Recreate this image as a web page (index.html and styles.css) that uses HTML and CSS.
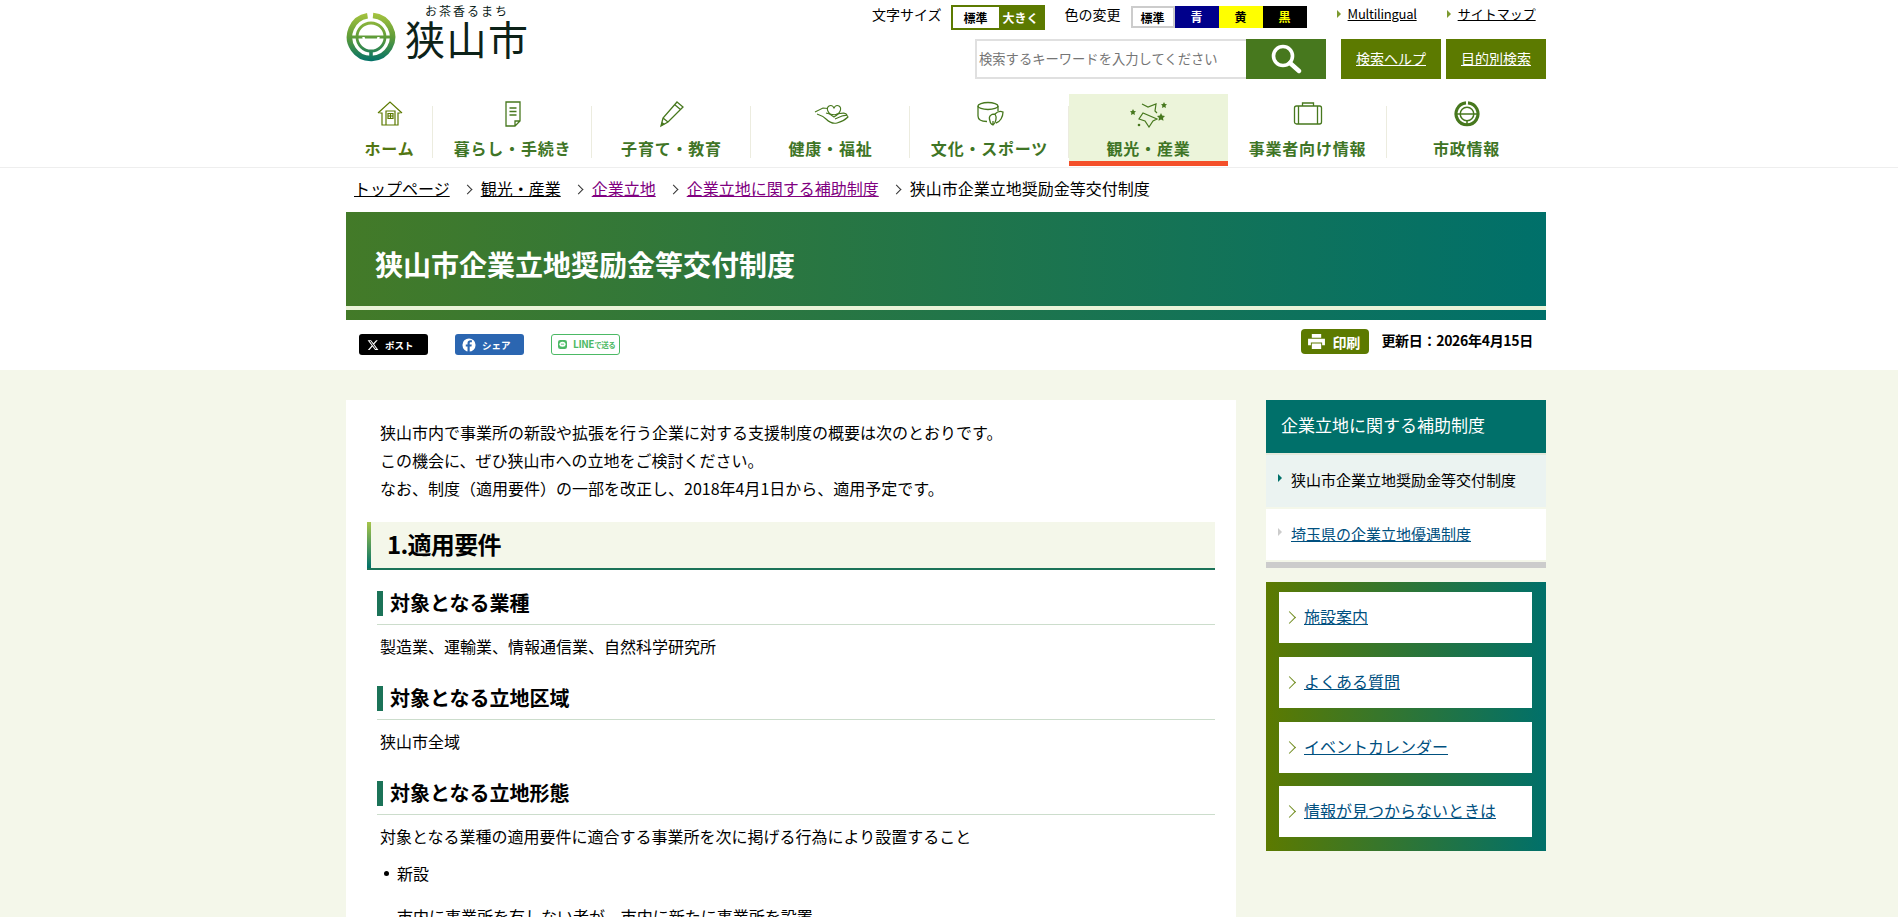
FILE: index.html
```html
<!DOCTYPE html>
<html lang="ja">
<head>
<meta charset="utf-8">
<title>狭山市企業立地奨励金等交付制度</title>
<link rel="stylesheet" href="styles.css">
</head>
<body>
<header class="site-header">
  <div class="wrap top">
    <a class="logo">
      <svg class="emblem" viewBox="0 0 50 50" width="50" height="50" aria-hidden="true">
        <defs>
          <linearGradient id="lg" gradientUnits="userSpaceOnUse" x1="0" y1="0" x2="0" y2="50">
            <stop offset="0" stop-color="#a9c53f"/><stop offset=".5" stop-color="#5f9c38"/><stop offset="1" stop-color="#00706a"/>
          </linearGradient>
        </defs>
        <g fill="none" stroke="url(#lg)">
          <path stroke-width="5.500" d="M21.500 3.800A21.500 21.500 0 1 0 27 3.600"/>
          <circle cx="25" cy="25" r="14" stroke-width="2.800"/>
          <path stroke-width="3" d="M5 25H45"/>
          <path stroke-width="3.600" d="M25 39V46"/>
          <path stroke-width="2.400" d="M17.500 25a7.500 9 0 0 0 15 0" stroke="#fff"/>
        </g>
      </svg>
      <span class="logo-text"><small>お茶香るまち</small><b>狭山市</b></span>
    </a>
    <div class="tools">
      <div class="tool-row">
        <span class="tool-label">文字サイズ</span>
        <span class="size-switch"><span class="sz-std">標準</span><span class="sz-big">大きく</span></span>
        <span class="tool-label color-label">色の変更</span>
        <span class="color-switch"><span class="c-std">標準</span><span class="c-blue">青</span><span class="c-yellow">黄</span><span class="c-black">黒</span></span>
        <a class="mini-link ml-first" href="#">Multilingual</a>
        <a class="mini-link ml-second" href="#">サイトマップ</a>
      </div>
      <div class="search-row">
        <div class="search-input">検索するキーワードを入力してください</div>
        <button class="search-btn" aria-label="検索">
          <svg viewBox="0 0 32 32" width="32" height="32"><circle cx="13" cy="13" r="9.500" fill="none" stroke="#fff" stroke-width="3.600"/><path d="M20 20l9 8" stroke="#fff" stroke-width="4.400" stroke-linecap="round"/></svg>
        </button>
        <a class="olive-btn help" href="#">検索ヘルプ</a>
        <a class="olive-btn purpose" href="#">目的別検索</a>
      </div>
    </div>
  </div>
  <nav class="gnav">
    <ul class="wrap gnav-list">
      <li class="home"><svg viewBox="0 0 32 28" width="32" height="28"><g fill="none" stroke="#5c7a00" stroke-width="1.200"><path d="M4 13L16 2l12 11M5.500 13h2.500v12h16V13h2.500"/><path d="M12 25V11h9v14M14 13.500h5v5h-5zM16.500 13.500v5M14 16h5"/></g></svg><span>ホーム</span></li>
      <li><svg viewBox="0 0 32 28" width="32" height="28"><g fill="none" stroke="#47781e" stroke-width="1.300"><path d="M9 2h14v19l-5 5H9zM23 21h-5v5M12.500 8h7M12.500 11.500h7M12.500 15h7"/></g></svg><span>暮らし・手続き</span></li>
      <li><svg viewBox="0 0 32 28" width="32" height="28"><g fill="none" stroke="#47781e" stroke-width="1.300"><path d="M21 2l6 5-15 15-7 4 2-8zM18.500 4.500l6 5M7 18l5 4"/></g><path d="M5 26l1-4 3 2z" fill="#47781e"/></svg><span>子育て・教育</span></li>
      <li><svg viewBox="0 0 36 28" width="36" height="28"><g fill="none" stroke="#47781e" stroke-width="1.100"><path d="M21 17c-7-4-8-9-5-11 2-1 4 0 5 2 1-2 3-3 5-2 3 2 2 7-5 11z"/><path d="M2 12l8-4 5 .5M4 14c3 1 6 2 9 5 3 3 7 5 11 4 4-1 8-3 11-6 0-2-3-2-6-1l-7 3M13 13c3 1 9 3 11 1 5-1 9-2 10 1"/></g></svg><span>健康・福祉</span></li>
      <li><svg viewBox="0 0 32 28" width="32" height="28"><g fill="none" stroke="#47781e" stroke-width="1.300"><ellipse cx="14" cy="6" rx="10" ry="3.500"/><path d="M4 6v10c0 4 4 5.500 9 5.500M24 6v5"/><path d="M16 21c-2-5 1-7 5-7 2 3 1 9-2 11-2-1-3-2-3-4zM21 14c3-3 6-3 8-2 0 5-3 10-7 11M19 25v-4"/></g></svg><span>文化・スポーツ</span></li>
      <li class="active"><svg viewBox="0 0 40 28" width="40" height="28"><g fill="#47781e"><path d="M4 9l1 2 2 .3-1.500 1.400.4 2.300-1.900-1.100-2 1.100.4-2.300L1 11.300l2-.3zM35 2l1 2 2 .3-1.500 1.400.4 2.300-1.900-1.100-2 1.100.4-2.300L32 4.300l2-.3zM32 13l1.200 2.500 2.800.4-2 2 .5 2.800-2.500-1.300-2.500 1.300.5-2.800-2-2 2.800-.4z"/><circle cx="10" cy="25" r="1.300"/></g><path d="M13 4l6 3 8-3-1 7 2 2M28 19l-4 2-4 6-4-6-6-2 4-6z" fill="none" stroke="#47781e" stroke-width="1.200"/></svg><span>観光・産業</span></li>
      <li><svg viewBox="0 0 32 28" width="32" height="28"><g fill="none" stroke="#47781e" stroke-width="1.300"><rect x="2.500" y="6" width="27" height="18" rx="2"/><path d="M10.500 6V3h11v3M6.500 6v18M25.500 6v18"/></g></svg><span>事業者向け情報</span></li>
      <li class="last"><svg viewBox="0 0 32 28" width="32" height="28"><g fill="none" stroke="#47781e"><path stroke-width="3.200" d="M15 2.800A11 11 0 1 0 17 2.800"/><circle cx="16" cy="14" r="6.800" stroke-width="1.500"/><path stroke-width="1.500" d="M5 14h22M16 21v4"/></g></svg><span>市政情報</span></li>
    </ul>
  </nav>
</header>

<div class="wrap crumb">
  <a class="c-top" href="#">トップページ</a>
  <a class="c-dark" href="#">観光・産業</a>
  <a class="c-visited" href="#">企業立地</a>
  <a class="c-visited" href="#">企業立地に関する補助制度</a>
  <span class="c-current">狭山市企業立地奨励金等交付制度</span>
</div>

<section class="wrap page-title"><h1>狭山市企業立地奨励金等交付制度</h1></section>

<div class="wrap share-row">
  <a class="sns sns-x"><svg viewBox="0 0 24 24" width="12" height="12"><path fill="#fff" d="M18.244 2.250h3.308l-7.227 8.260 8.502 11.240H16.170l-5.214-6.817L4.990 21.750H1.680l7.730-8.835L1.254 2.250H8.080l4.713 6.231zm-1.161 17.520h1.833L7.084 4.126H5.117z"/></svg><b>ポスト</b></a>
  <a class="sns sns-fb"><svg viewBox="0 0 16 16" width="14" height="14"><circle cx="8" cy="8" r="7.500" fill="#fff"/><path d="M8.800 16V9.800h2l.4-2.400H8.800V6c0-.8.300-1.200 1.200-1.200h1.300V2.700c-2.800-.5-5 .2-5 3v1.700H4.300v2.400h2V16z" fill="#2b66b1"/></svg><b>シェア</b></a>
  <a class="sns sns-line"><svg viewBox="0 0 14 14" width="9" height="9"><rect width="14" height="14" rx="3.500" fill="#4cb965"/><ellipse cx="7" cy="6.500" rx="4.800" ry="3.900" fill="#fff"/><path d="M4.500 6.500h5" stroke="#4cb965" stroke-width="1.300"/></svg><b>LINE<small>で送る</small></b></a>
  <div class="share-right">
    <a class="print"><svg viewBox="0 0 18 16" width="17" height="15"><path d="M4 0h10v4H4zM0 5h18v7h-3V9H3v3H0zM4 10h10v6H4z" fill="#fff"/></svg><b>印刷</b></a>
    <span class="updated">更新日：2026年4月15日</span>
  </div>
</div>

<main class="content-band">
  <div class="wrap columns">
    <article class="article">
      <div class="lead">
        <p>狭山市内で事業所の新設や拡張を行う企業に対する支援制度の概要は次のとおりです。</p>
        <p>この機会に、ぜひ狭山市への立地をご検討ください。</p>
        <p>なお、制度（適用要件）の一部を改正し、2018年4月1日から、適用予定です。</p>
      </div>
      <h2>1.適用要件</h2>
      <h3><span>対象となる業種</span></h3>
      <p class="body">製造業、運輸業、情報通信業、自然科学研究所</p>
      <h3><span>対象となる立地区域</span></h3>
      <p class="body">狭山市全域</p>
      <h3><span>対象となる立地形態</span></h3>
      <p class="body">対象となる業種の適用要件に適合する事業所を次に掲げる行為により設置すること</p>
      <ul class="bullets">
        <li>新設</li>
      </ul>
      <p class="sub">市内に事業所を有しない者が、市内に新たに事業所を設置</p>
    </article>
    <aside class="side">
      <div class="side-menu">
        <h2 class="side-title">企業立地に関する補助制度</h2>
        <div class="side-item current">狭山市企業立地奨励金等交付制度</div>
        <div class="side-item"><a href="#">埼玉県の企業立地優遇制度</a></div>
      </div>
      <ul class="side-links">
        <li><a href="#">施設案内</a></li>
        <li><a href="#">よくある質問</a></li>
        <li><a href="#">イベントカレンダー</a></li>
        <li class="tail"><a href="#">情報が見つからないときは</a></li>
      </ul>
    </aside>
  </div>
</main>
</body>
</html>
```
FILE: styles.css
```css
* { box-sizing: border-box; }
html, body { margin: 0; padding: 0; height: 917px; overflow: hidden; background: #fff; }
body { font-family: "Noto Sans CJK JP", "Noto Sans", sans-serif; font-size: 16px; line-height: 28px; color: #000; }
a { color: inherit; }
ul { list-style: none; margin: 0; padding: 0; }
p, h1, h2, h3 { margin: 0; }
.wrap { width: 1200px; margin: 0 0 0 346px; }

/* header */
.top { display: flex; justify-content: space-between; height: 94px; }
.logo { display: flex; padding-top: 12px; color: #0c2218; }
.emblem { display: block; }
.logo-text { display: flex; flex-direction: column; margin-left: 9px; margin-top: -8px; }
.logo-text small { font-size: 12px; line-height: 14px; letter-spacing: 2px; margin-left: 20px; }
.logo-text b { font-size: 40px; font-weight: 400; line-height: 41px; letter-spacing: 1.500px; }
.tools { width: 674px; }
.tool-row { display: flex; align-items: center; height: 39px; padding-bottom: 9px; padding-top: 4px; font-size: 14px; line-height: 26px; }
.tool-label { margin: -6px 10px 0 0; }
.color-label { margin-left: 20px; }
.size-switch { display: flex; width: 94px; height: 25px; border: 2px solid #5c7a00; font-size: 12px; line-height: 21px; text-align: center; font-weight: 700; margin-left: -1px; }
.sz-std { width: 46px; }
.sz-big { flex: 1; background: #5c7a00; color: #fff; }
.color-switch { display: flex; height: 22px; font-size: 12px; font-weight: 700; line-height: 20px; text-align: center; }
.color-switch span { width: 44px; }
.c-std { border: 2px solid #ccc; }
.c-blue { background: #00008b; color: #fff; line-height: 22px; }
.c-yellow { background: #ff0; line-height: 22px; }
.c-black { background: #000; color: #ff0; line-height: 22px; }
.mini-link { position: relative; margin-top: -6px; font-size: 13px; white-space: nowrap; }
.mini-link::before { content: ""; position: absolute; left: -11px; top: 9px; border-left: 4px solid #7c9a30; border-top: 4px solid transparent; border-bottom: 4px solid transparent; }
.ml-first { margin-left: 41px; letter-spacing: -.25px; }
.ml-second { margin-left: 41px; }
.search-row { display: flex; height: 40px; margin-left: 103px; }
.search-input { width: 271px; border: 2px solid #e0e0e0; border-right: 0; font-size: 13.300px; line-height: 36px; padding-left: 2px; color: #757575; }
.search-btn { width: 80px; border: 0; padding: 0; background: #47781e; display: flex; align-items: center; justify-content: center; }
.olive-btn { display: block; background: #5c7a00; color: #fff; font-size: 14px; text-align: center; line-height: 39px; }
.help { width: 100px; margin-left: 15px; }
.purpose { width: 100px; margin-left: 5px; }

/* global nav */
.gnav { border-bottom: 1px solid #eee; height: 74px; }
.gnav-list { display: flex; height: 73px; align-items: flex-start; }
.gnav-list li { position: relative; flex: 0 0 159px; height: 72px; display: flex; flex-direction: column; align-items: center; padding-top: 6px; font-size: 16px; font-weight: 700; color: #3f7526; letter-spacing: .8px; }
.gnav-list li svg { display: block; height: 28px; }
.gnav-list li span { margin-top: 8px; line-height: 24px; white-space: nowrap; }
.gnav-list li::after { content: ""; position: absolute; right: 0; top: 12px; height: 52px; width: 1px; background: #ececdf; }
.gnav-list .home { flex-basis: 87px; color: #527612; }
.gnav-list .last::after { display: none; }
.gnav-list .active { background: #ecf4da; border-bottom: 5px solid #f4502a; }
.gnav-list .active::after { display: none; }

/* breadcrumb */
.crumb { display: flex; height: 44px; padding-left: 8px; line-height: 40px; }
.crumb > * { position: relative; white-space: nowrap; }
.crumb > * + * { margin-left: 31px; }
.crumb > * + *::before { content: ""; position: absolute; left: -17px; top: 18px; width: 6px; height: 6px; border-top: 1px solid #333; border-right: 1px solid #333; transform: rotate(45deg); }
.c-visited { color: #800080; }

/* title */
.page-title { height: 108px; padding: 26px 29px 0; background: linear-gradient(#0000 94px, #eaf3d8 94px, #eaf3d8 98px, #0000 98px), linear-gradient(90deg, #437a28, #00706a); }
.page-title h1 { font-size: 28px; line-height: 52px; font-weight: 700; color: #fff; }

/* share */
.share-row { display: flex; height: 50px; padding: 14px 13px 0; align-items: flex-start; }
.sns { display: flex; align-items: center; gap: 6px; width: 69px; height: 21px; padding-left: 8px; border-radius: 3px; font-size: 9.500px; line-height: 20px; margin-right: 27px; text-decoration: none; }
.sns b { white-space: nowrap; }
.sns-x { background: #000; color: #fff; }
.sns-fb { background: #2b66b1; color: #fff; padding-left: 7px; }
.sns-line { background: #fff; border: 1px solid #4cb965; color: #4cb965; padding-left: 6px; gap: 6px; font-size: 10px; letter-spacing: -.4px; }
.sns-line small { font-size: 7.500px; }
.share-right { margin-left: auto; display: flex; margin-top: -5px; }
.print { display: flex; align-items: center; gap: 7px; padding-left: 7px; width: 68px; height: 25px; border-radius: 4px; background: #5c7a00; color: #fff; font-size: 14px; }
.updated { margin-left: 12px; font-size: 14px; font-weight: 700; line-height: 22px; letter-spacing: -.3px; }

/* content */
.content-band { background: #f4f7ea; padding-top: 30px; height: 547px; overflow: hidden; }
.columns { display: flex; justify-content: space-between; align-items: flex-start; }
.article { width: 890px; height: 600px; background: #fff; padding: 18px 21px 0; }
.lead p, .body { padding-left: 13px; }
.article h2 { margin-top: 20px; height: 48px; background: linear-gradient(#a6c44a, #00706a) left / 4px 100% no-repeat #f4f7ea; font-size: 24px; line-height: 44px; font-weight: 700; letter-spacing: -.7px; padding-left: 20px; border-bottom: 2px solid #1b7358; }
.article h3 { margin: 26px 0 0 10px; height: 34px; border-bottom: 1px solid #ccddcc; font-size: 20px; font-weight: 700; line-height: 24px; }
.article h3 span { display: block; height: 25px; border-left: 6px solid #1b7358; padding-left: 7px; }
.article h2 + h3 { margin-top: 21px; }
.body { margin-top: 7px; }
.bullets { margin-top: 9px; padding-left: 30px; }
.bullets li { position: relative; }
.bullets li::before { content: ""; position: absolute; left: -13px; top: 12px; width: 5px; height: 5px; border-radius: 50%; background: #000; }
.sub { margin-top: 15px; padding-left: 30px; }

/* sidebar */
.side { width: 280px; }
.side-menu { border-bottom: 6px solid #ccc; }
.side-title { height: 55px; background: #00706a; border-bottom: 2px solid #e4e8dc; color: #fff; font-size: 17px; font-weight: 400; line-height: 50px; padding-left: 15px; }
.side-item { position: relative; height: 51px; margin-bottom: 2px; background: #fff; font-size: 15px; line-height: 50px; padding-left: 25px; white-space: nowrap; color: #00507f; }
.side-item::before { content: ""; position: absolute; left: 12px; top: 19px; border-left: 4px solid #ccc; border-top: 4px solid transparent; border-bottom: 4px solid transparent; }
.side-item.current { height: 52px; background: #ebf3f1; color: #000; }
.side-item.current::before { border-left-color: #00706a; }
.side-links { margin-top: 14px; height: 269px; padding: 10px 14px 0 13px; background: linear-gradient(90deg, #5c7a00, #00706a); }
.side-links li { position: relative; height: 51px; margin-bottom: 14px; background: #fff; line-height: 49px; padding-left: 25px; color: #00507f; }
.side-links li.tail { margin-top: -1px; }
.side-links li::before { content: ""; position: absolute; left: 6px; top: 21px; width: 8px; height: 8px; border-top: 1.500px solid #6d8a1a; border-right: 1.500px solid #6d8a1a; transform: rotate(45deg); }
```
